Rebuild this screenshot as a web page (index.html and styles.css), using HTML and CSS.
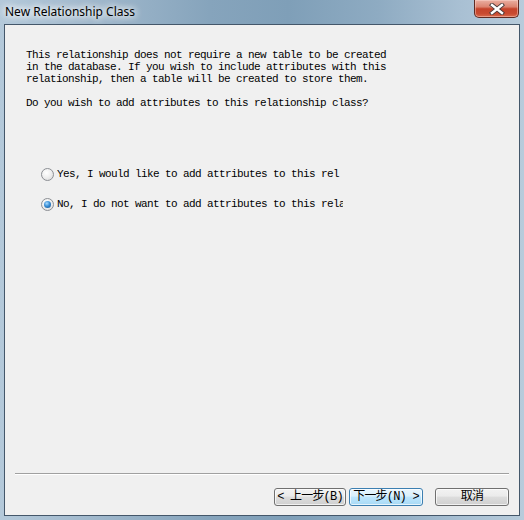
FILE: index.html
```html
<!DOCTYPE html>
<html lang="en">
  <head>
    <meta charset="UTF-8" />
    <title>New Relationship Class</title>
    <link rel="stylesheet" href="styles.css">
  </head>
  <body>
    <div class="window">
      <div class="titlebar">
        <span class="title">New Relationship Class</span>
        <div class="close-btn">
          <svg width="16" height="12" viewBox="0 0 16 12">
            <path d="M3 2 L13 10 M13 2 L3 10" stroke="#4a3a3a" stroke-width="4.2" stroke-linecap="square" />
            <path d="M3 2 L13 10 M13 2 L3 10" stroke="#ffffff" stroke-width="2.4" stroke-linecap="square" />
          </svg>
        </div>
      </div>

      <div class="client">
        <div class="intro">
          <p>This relationship does not require a new table to be created<br>in the database. If you wish to include attributes with this<br>relationship, then a table will be created to store them.</p>
          <p>Do you wish to add attributes to this relationship class?</p>
        </div>

        <!-- Choix -->
        <div class="options">
          <label class="option">
            <span class="radio"></span>
            <span class="option-text">Yes, I would like to add attributes to this rel</span>
          </label>
          <label class="option">
            <span class="radio checked"></span>
            <span class="option-text">No, I do not want to add attributes to this relationship class</span>
          </label>
        </div>

        <div class="spacer"></div>
        <div class="separator"></div>

        <div class="buttons">
          <button class="btn">&lt; 上一步(B)</button>
          <button class="btn focused">下一步(N) &gt;</button>
          <button class="btn cancel">取消</button>
        </div>
      </div>
    </div>
  </body>
</html>
```

FILE: styles.css
```css
body {
  margin: 0;
  padding: 0;
  background-color: #ffffff;
}
.window {
  width: 524px;
  height: 520px;
  display: flex;
  flex-direction: column;
  background: linear-gradient(to right, #b4c9da 0%, #a0b8cc 18%, #86a4bc 40%, #7f9fb8 55%, #8eabc2 72%, #a9c0d3 88%, #b7cbdb 100%);
}
.titlebar {
  position: relative;
  height: 24px;
  display: flex;
  align-items: center;
  padding-left: 5px;
}
.title {
  font-family: "Noto Sans", sans-serif;
  font-size: 12px;
  color: #000;
  margin-top: -2px;
  text-shadow: 0 0 6px #fff, 0 0 8px #fff, 0 0 10px rgba(255, 255, 255, 0.8);
}
.close-btn {
  position: absolute;
  top: 0;
  right: 5px;
  width: 43px;
  height: 17px;
  border: 1px solid #5f2a22;
  border-top: none;
  border-radius: 0 0 5px 5px;
  background: linear-gradient(#eab0a2 0%, #dc8470 40%, #c5432a 52%, #c94a30 80%, #d96a4c 100%);
  display: flex;
  justify-content: center;
  align-items: center;
  box-shadow: inset 0 0 0 1px rgba(255, 220, 210, 0.45);
}
.client {
  flex: 1;
  margin: 0 4px 4px 4px;
  border: 1px solid #44576a;
  background-color: #f0f0f0;
  display: flex;
  flex-direction: column;
  padding: 0 10px 9px 10px;
  font-family: "Liberation Mono", "Noto Sans CJK SC", monospace;
  font-size: 11px;
  letter-spacing: -0.6px;
  line-height: 12px;
  color: #000;
}
.intro {
  margin: 24px 0 0 11px;
}
.intro p {
  margin: 0 0 12px 0;
  white-space: nowrap;
}
.options {
  margin: 45px 0 0 26px;
  display: flex;
  flex-direction: column;
  gap: 14px;
}
.option {
  display: flex;
  align-items: center;
  height: 16px;
}
.radio {
  width: 11px;
  height: 11px;
  border: 1px solid #8c8f94;
  border-radius: 50%;
  background: radial-gradient(circle at 40% 35%, #ffffff 0%, #f0f0f0 45%, #d6d6d6 100%);
  flex-shrink: 0;
  position: relative;
}
.radio.checked::after {
  content: "";
  position: absolute;
  left: 2px;
  top: 2px;
  width: 7px;
  height: 7px;
  border-radius: 50%;
  background: radial-gradient(circle at 40% 35%, #a8dbff 0%, #3a8fd6 45%, #134d87 100%);
}
.option-text {
  margin-left: 3px;
  width: 286px;
  overflow: hidden;
  white-space: nowrap;
}
.spacer {
  flex: 1;
}
.separator {
  height: 0;
  border-top: 1px solid #a0a0a0;
  border-bottom: 1px solid #ffffff;
}
.buttons {
  display: flex;
  justify-content: flex-end;
  gap: 3px;
  margin-top: 13px;
}
.btn {
  width: 72px;
  height: 18px;
  padding: 0;
  border: 1px solid #707070;
  border-radius: 3px;
  background: linear-gradient(#f2f2f2 0%, #ebebeb 45%, #dddddd 50%, #cfcfcf 100%);
  font-family: "Liberation Mono", "Noto Sans CJK SC", monospace;
  font-size: 12px;
  letter-spacing: -0.8px;
  line-height: 14px;
  color: #000;
  box-shadow: inset 0 0 0 1px rgba(255, 255, 255, 0.7);
}
.btn.focused {
  width: 74px;
  border-color: #3c7fb1;
  background: linear-gradient(#eaf6fd 0%, #d9f0fc 45%, #bee6fd 50%, #a7d9f5 100%);
}
.btn.cancel {
  width: 74px;
  margin-left: 9px;
}
```
